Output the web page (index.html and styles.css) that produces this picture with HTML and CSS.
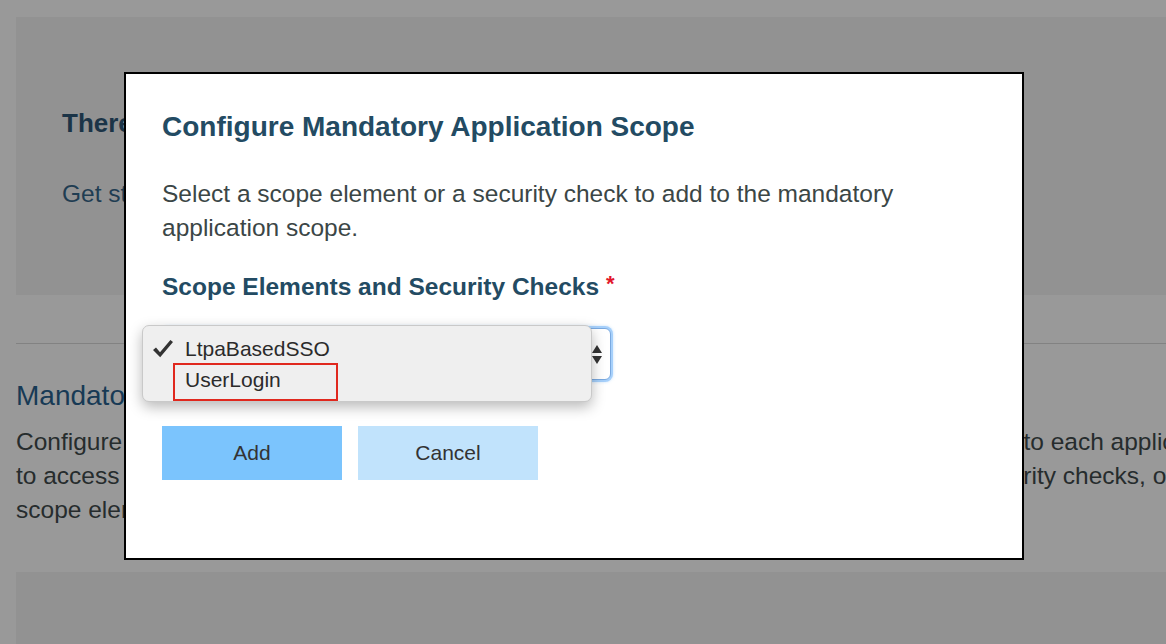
FILE: index.html
```html
<!DOCTYPE html>
<html lang="en">
<head>
<meta charset="utf-8">
<title>Configure Mandatory Application Scope</title>
<link rel="stylesheet" href="styles.css">
</head>
<body>
<div class="page">
  <section class="panel panel-top">
    <h3 class="empty-title">There are no mandatory application scope elements defined.</h3>
    <p class="empty-text">Get started by adding a scope element or a security check.</p>
  </section>
  <hr class="divider">
  <section class="scope-section">
    <h2 class="section-title">Mandatory Application Scope</h2>
    <p class="section-text">Configure a mandatory application scope. The scope elements that you add now are applied to each application<br>to access protected resources. The mandatory application scope can contain registered security checks, or<br>scope elements that are mapped to security checks.</p>
  </section>
  <section class="panel panel-bottom"></section>
</div>

<div class="modal" role="dialog">
  <h1 class="modal-title">Configure Mandatory Application Scope</h1>
  <p class="modal-text">Select a scope element or a security check to add to the mandatory application scope.</p>
  <div class="field-label">Scope Elements and Security Checks <span class="required">*</span></div>
  <div class="select-wrap">
    <div class="select">
      <svg class="select-arrows" width="10" height="19" viewBox="0 0 10 19"><path d="M5 0 L10 8 L0 8 Z M0 11 L10 11 L5 19 Z" fill="#333"/></svg>
    </div>
    <ul class="dropdown">
      <li class="option"><span class="check"><svg width="20" height="18" viewBox="0 0 20 18"><path d="M0 10 L3 7.6 L7 12.2 L17.4 0 L20 2 L7.2 17.2 Z" fill="#333"/></svg></span>LtpaBasedSSO</li>
      <li class="option"><span class="check"></span>UserLogin</li>
      <li class="highlight"></li>
    </ul>
  </div>
  <div class="actions">
    <button class="btn btn-primary">Add</button>
    <button class="btn btn-secondary">Cancel</button>
  </div>
</div>
</body>
</html>
```

FILE: styles.css
```css
html, body {
  margin: 0;
  height: 100%;
  overflow: hidden;
}
body {
  background: #999999;
  font-family: "Liberation Sans", Arial, Helvetica, sans-serif;
  position: relative;
}
.page {
  padding: 17px 0 0 16px;
  white-space: nowrap;
}
.panel {
  background: #929292;
}
.panel-top {
  height: 278px;
  box-sizing: border-box;
  padding: 89px 0 0 46px;
}
.empty-title {
  margin: 0;
  font-size: 26px;
  line-height: 34px;
  font-weight: bold;
  color: #1b3447;
}
.empty-text {
  margin: 37px 0 0;
  font-size: 24.5px;
  line-height: 34px;
  color: #1f3d52;
}
.divider {
  margin: 48px 0 0;
  border: 0;
  border-top: 1px solid #828282;
  height: 0;
}
.section-title {
  margin: 35px 0 0;
  font-size: 28px;
  line-height: 34px;
  font-weight: normal;
  color: #173a55;
}
.section-text {
  margin: 12px 0 0;
  font-size: 24.5px;
  line-height: 34px;
  color: #262c2d;
}
.panel-bottom {
  margin-top: 45px;
  height: 100px;
}

.modal {
  position: absolute;
  left: 124px;
  top: 72px;
  width: 900px;
  height: 488px;
  box-sizing: border-box;
  border: 2px solid #000;
  background: #fff;
  padding: 36px 36px 0;
}
.modal-title {
  margin: 0;
  font-size: 28px;
  line-height: 34px;
  font-weight: bold;
  color: #234b63;
}
.modal-text {
  margin: 33px 0 0;
  width: 760px;
  white-space: normal;
  font-size: 24.5px;
  line-height: 34px;
  color: #3b4646;
}
.field-label {
  margin-top: 22px;
  font-size: 24.5px;
  line-height: 34px;
  font-weight: bold;
  color: #234b63;
}
.required {
  color: #e2162c;
  font-size: 22px;
  vertical-align: 4px;
}
.select-wrap {
  position: relative;
  margin-top: 24px;
  width: 449px;
  height: 52px;
}
.select {
  height: 100%;
  box-sizing: border-box;
  border: 1px solid #7aa9e0;
  border-radius: 6px;
  box-shadow: 0 0 0 2px #a6d0fb, 0 0 3px 2px rgba(140, 195, 250, 0.5);
  background: #fff;
  display: flex;
  align-items: center;
  justify-content: flex-end;
  padding-right: 8px;
}
.select-arrows {
  display: block;
}
.dropdown {
  position: absolute;
  left: -20px;
  top: -3px;
  width: 450px;
  height: 77px;
  box-sizing: border-box;
  margin: 0;
  padding: 7px 0 0 10px;
  list-style: none;
  background: #efefef;
  border: 1px solid #c9c9c9;
  border-radius: 7px;
  box-shadow: 0 5px 14px rgba(0, 0, 0, 0.28);
}
.option {
  display: flex;
  align-items: center;
  height: 31px;
  font-size: 21px;
  color: #2b2b2b;
}
.check {
  width: 32px;
  display: flex;
  align-items: center;
}
.check svg {
  display: block;
}
.highlight {
  position: absolute;
  left: 30px;
  top: 37px;
  width: 165px;
  height: 38px;
  box-sizing: border-box;
  border: 2px solid #e0281e;
}
.actions {
  display: flex;
  gap: 16px;
  margin-top: 46px;
}
.btn {
  width: 180px;
  height: 54px;
  border: 0;
  font-family: inherit;
  font-size: 21px;
  color: #333;
  padding: 0;
}
.btn-primary {
  background: #7bc4fd;
}
.btn-secondary {
  background: #c1e3fc;
}
```
